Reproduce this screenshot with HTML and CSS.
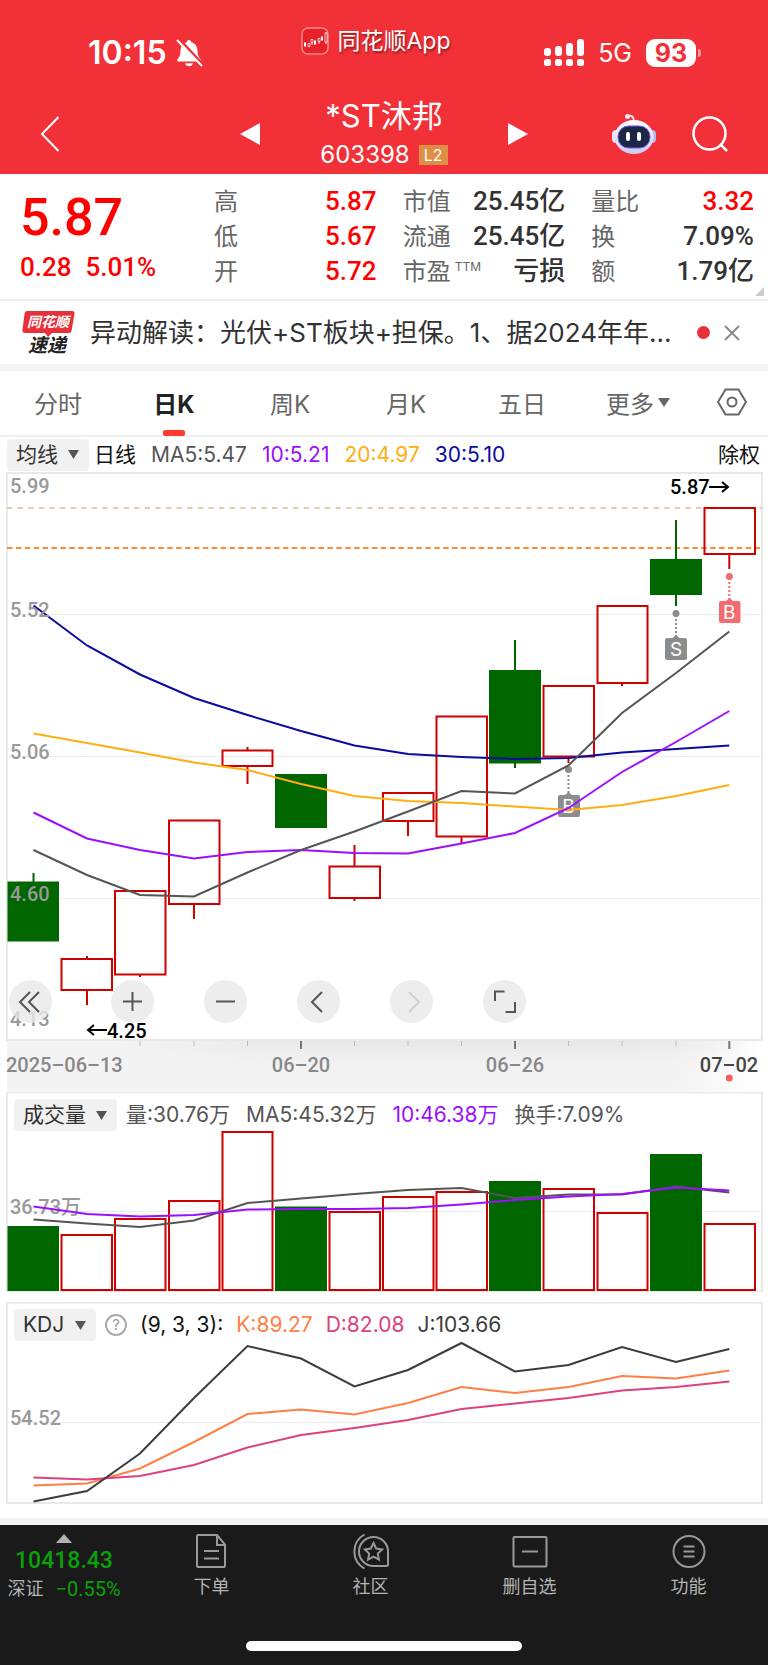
FILE: index.html
```html
<!DOCTYPE html>
<html lang="zh-CN">
  <head>
    <meta charset="UTF-8" />
    <meta name="viewport" content="width=device-width, initial-scale=1.0" />
    <title>*ST沐邦 603398</title>
    <link rel="stylesheet" href="styles.css">
  </head>
  <body>
    <header class="header">
      <div class="status">
        <div class="status-time">
          <span>10:15</span>
          <svg width="28" height="28" viewBox="0 0 28 28">
            <path d="M14 1c1.500 0 2.200 1 2.300 2.200 4 1.200 6 4.300 6.200 8.300.2 4.600 1 6.500 3 8.700.8 1 .4 2.300-.9 2.300H3.400c-1.300 0-1.700-1.300-.9-2.300 2-2.200 2.800-4.100 3-8.700.2-4 2.200-7.100 6.200-8.300C11.800 2 12.500 1 14 1z" fill="#fff" />
            <path d="M10 24.300h8c-.5 1.900-2 3-4 3s-3.500-1.100-4-3z" fill="#fff" />
            <path d="M4 0l24 26" stroke="#f13037" stroke-width="3" />
            <path d="M2 1l25 26" stroke="#fff" stroke-width="2" />
          </svg>
        </div>
        <div class="status-app">
          <svg width="28" height="28" viewBox="0 0 28 28">
            <rect x="1" y="1" width="26" height="26" rx="6" fill="#e8222b" stroke="#f9888b" stroke-width="1.500" />
            <path d="M4 15v5M8 16v4M11 12v6M14 13v5M18 11v6M21 9v5M25 5v12" stroke="#fff" stroke-width="1" />
            <path d="M3 16h2v3H3zM13 14h2v3h-2zM20 10h2v3h-2z" fill="#fff" />
            <path d="M7 16.500h2v3H7zM10 12.500h2v3h-2zM17 11.500h2v3h-2zM24 6h2v9h-2z" fill="#e8222b" stroke="#fff" stroke-width=".7" />
          </svg>
          <span>同花顺App</span>
        </div>
        <div class="status-signal">
          <svg width="40" height="28" viewBox="0 0 40 28" fill="#fff">
            <rect x="0" y="9" width="7" height="8" rx="3" />
            <rect x="11" y="7" width="7" height="10" rx="3" />
            <rect x="22" y="4" width="7" height="13" rx="3" />
            <rect x="33" y="0" width="7" height="17" rx="3" />
            <rect x="0" y="20" width="7" height="7" rx="2.500" />
            <rect x="11" y="20" width="7" height="7" rx="2.500" />
            <rect x="22" y="20" width="7" height="7" rx="2.500" />
            <rect x="33" y="20" width="7" height="7" rx="2.500" />
          </svg>
          <span class="network">5G</span>
          <span class="battery">93</span>
        </div>
      </div>

      <div class="titlebar">
        <button class="icon-btn back" aria-label="返回">
          <svg width="20" height="38" viewBox="0 0 20 38" fill="none">
            <path d="M18.500 2L2 19l16.500 17" stroke="#fff" stroke-width="2" />
          </svg>
        </button>
        <div class="stock">
          <button class="icon-btn" aria-label="上一只">
            <svg width="20" height="22" viewBox="0 0 20 22"><path d="M20 0v22L0 11z" fill="#fff" /></svg>
          </button>
          <div class="stock-name">
            <h1>*ST沐邦</h1>
            <p>603398 <span class="level">L2</span></p>
          </div>
          <button class="icon-btn" aria-label="下一只">
            <svg width="20" height="22" viewBox="0 0 20 22"><path d="M0 0v22l20-11z" fill="#fff" /></svg>
          </button>
        </div>
        <div class="title-actions">
          <button class="icon-btn" aria-label="智能助手">
            <svg width="44" height="42" viewBox="0 0 44 42">
              <defs>
                <linearGradient id="shell" x1="0" y1="0" x2="0" y2="1">
                  <stop offset="0" stop-color="#fff" />
                  <stop offset="1" stop-color="#c9cbf1" />
                </linearGradient>
              </defs>
              <path d="M16 3c4-1 6 1 6 6" fill="none" stroke="#f3e3f5" stroke-width="2" />
              <circle cx="15.500" cy="3.500" r="2.500" fill="#f5e6f4" />
              <rect x="0" y="17" width="9" height="13" rx="4" fill="#e3e1f8" />
              <rect x="35" y="17" width="9" height="13" rx="4" fill="#b7b9f3" />
              <ellipse cx="22" cy="24" rx="19.500" ry="17" fill="url(#shell)" />
              <rect x="6" y="13" width="32" height="22" rx="10.500" fill="#1c2646" stroke="#7a55e8" stroke-width="1" />
              <rect x="14" y="19" width="4" height="9" rx="2" fill="#fff" />
              <rect x="25" y="19" width="4" height="9" rx="2" fill="#fff" />
            </svg>
          </button>
          <button class="icon-btn" aria-label="搜索">
            <svg width="36" height="36" viewBox="0 0 36 36" fill="none" stroke="#fff" stroke-width="2.500">
              <circle cx="17.500" cy="17.500" r="16" />
              <path d="M28 28l7 7" />
            </svg>
          </button>
        </div>
      </div>
    </header>

    <main>
      <section class="quote">
        <div class="price">
          <strong>5.87</strong>
          <p><span>0.28</span><span>5.01%</span></p>
        </div>
        <dl class="stats">
          <div><dt>高</dt><dd class="up">5.87</dd></div>
          <div><dt>低</dt><dd class="up">5.67</dd></div>
          <div><dt>开</dt><dd class="up">5.72</dd></div>
        </dl>
        <dl class="stats">
          <div><dt>市值</dt><dd>25.45亿</dd></div>
          <div><dt>流通</dt><dd>25.45亿</dd></div>
          <div><dt>市盈<sup>TTM</sup></dt><dd>亏损</dd></div>
        </dl>
        <dl class="stats">
          <div><dt>量比</dt><dd class="up">3.32</dd></div>
          <div><dt>换</dt><dd>7.09%</dd></div>
          <div><dt>额</dt><dd>1.79亿</dd></div>
        </dl>
        <svg class="corner" width="9" height="9" viewBox="0 0 9 9"><path d="M9 0v9H0z" fill="#ccc" /></svg>
      </section>

      <section class="news">
        <svg class="news-logo" width="54" height="46" viewBox="0 0 54 46">
          <path d="M5 1h45q3 0 2.500 3l-3 17q-.5 2-2.500 2H30l-4 4-3-4H3q-3 0-2.500-3l2-16q.5-3 2.500-3z" fill="#e8303a" />
          <text class="logo-top" x="5" y="17">同花顺</text>
          <text class="logo-bottom" x="6" y="42">速递</text>
        </svg>
        <a href="#news">异动解读：光伏+ST板块+担保。1、据2024年年...</a>
        <span class="dot"></span>
        <button class="icon-btn" aria-label="关闭">
          <svg width="16" height="16" viewBox="0 0 16 16"><path d="M1 1l14 14M15 1L1 15" stroke="#8c8c8c" stroke-width="2" /></svg>
        </button>
      </section>

      <nav class="tabs">
        <button>分时</button>
        <button class="active">日K</button>
        <button>周K</button>
        <button>月K</button>
        <button>五日</button>
        <button aria-haspopup="menu">更多<svg width="12" height="9" viewBox="0 0 12 9"><path d="M0 0h12L6 9z" fill="#666" /></svg></button>
        <button aria-label="设置">
          <svg width="30" height="28" viewBox="0 0 30 28" fill="none" stroke="#666" stroke-width="2">
            <path d="M8.500 1.500h13L29 14l-7.500 12.500h-13L1 14z" />
            <circle cx="15" cy="14" r="4.500" />
          </svg>
        </button>
      </nav>

      <div class="legend ma-legend">
        <label class="picker">
          <select aria-label="主图指标"><option>均线</option></select>
          <svg width="11" height="9" viewBox="0 0 11 9"><path d="M0 0h11L5.500 9z" fill="#555" /></svg>
        </label>
        <span class="strong">日线</span>
        <span>MA5:5.47</span>
        <span class="purple">10:5.21</span>
        <span class="amber">20:4.97</span>
        <span class="navy">30:5.10</span>
        <span class="strong last">除权</span>
      </div>

      <section class="kline">
        <svg class="chart" viewBox="0 472 768 620">
          <defs>
            <linearGradient id="axisX" x1="0" x2="1">
              <stop offset="0" stop-color="#f3f3f3" />
              <stop offset=".88" stop-color="#f3f3f3" />
              <stop offset="1" stop-color="#fff" />
            </linearGradient>
            <linearGradient id="axisY" x1="0" y1="0" x2="0" y2="1">
              <stop offset="0" stop-color="#e6e6e6" />
              <stop offset="1" stop-color="#f3f3f3" stop-opacity="0" />
            </linearGradient>
            <linearGradient id="fade" x1="0" x2="1">
              <stop offset="0" stop-color="#000" />
              <stop offset=".3" stop-color="#fff" />
              <stop offset=".8" stop-color="#fff" />
              <stop offset="1" stop-color="#000" />
            </linearGradient>
            <mask id="axisMask"><rect x="120" y="1040" width="642" height="52" fill="url(#fade)" /></mask>
          </defs>

          <!-- frame and grid -->
          <rect class="frame" x="7" y="473" width="755" height="567" />
          <path class="grid" d="M7 614.500h755M7 756.500h755M7 898.500h755" />
          <path class="limit" d="M7 508h755" />
          <path class="cost" d="M7 548h755" />

          <!-- candles -->
          <g class="down">
            <path d="M33.500 873v10M515 640v30M515 763v5M676 520v40M676 595v11" />
            <rect x="7.500" y="881.500" width="51.500" height="60" />
            <rect x="275" y="774" width="52" height="54" />
            <rect x="489" y="670" width="52" height="93.500" />
            <rect x="650" y="559" width="52" height="36" />
          </g>
          <g class="up-candle">
            <path d="M87 956v3M87 990v15M140 974v3M194 904v15M247.500 747v4M247.500 766v18M354.500 845v21M354.500 898v3M408 821v15M461.500 837v6M568.500 757v6M622 683v3M729.300 554v15" />
            <rect x="61.500" y="959" width="50.500" height="31" />
            <rect x="115" y="891" width="50.500" height="83.500" />
            <rect x="169" y="820.500" width="50.500" height="83.500" />
            <rect x="222.500" y="750.500" width="50" height="15.500" />
            <rect x="329.500" y="866.500" width="50.500" height="31.500" />
            <rect x="383" y="793" width="50.500" height="28" />
            <rect x="436.500" y="716.500" width="50.500" height="120" />
            <rect x="543.500" y="686" width="50.500" height="70.500" />
            <rect x="597.500" y="606" width="50" height="77" />
            <rect x="704.500" y="508" width="50.500" height="46" />
          </g>

          <!-- trade markers -->
          <g class="mark">
            <path d="M568.500 771v22M676 615v21" />
            <circle cx="568.500" cy="769.500" r="3.500" />
            <circle cx="676" cy="613.500" r="3.500" />
            <path class="flag" d="M560 795h5l3.500-3 3.500 3h6q2 0 2 2v18q0 2-2 2h-18q-2 0-2-2v-18q0-2 2-2z" />
            <path class="flag" d="M667 638h5.500l3.500-3 3.500 3h5.500q2 0 2 2v18q0 2-2 2h-18q-2 0-2-2v-18q0-2 2-2z" />
            <text x="568.500" y="813">B</text>
            <text x="676" y="656">S</text>
          </g>
          <g class="mark mark-buy">
            <path d="M729.300 578v21" />
            <circle cx="729.300" cy="576.500" r="3.500" />
            <path class="flag" d="M721 601h5l3.500-3 3.500 3h5.500q2 0 2 2v18q0 2-2 2h-17.500q-2 0-2-2v-18q0-2 2-2z" />
            <text x="729.300" y="619">B</text>
          </g>

          <!-- moving averages -->
          <polyline class="line navy" points="33.500,605.500 87,645.500 140,674.500 194,698 247.500,715 301,731 354.500,745.500 408,754 461.500,757 515,759 568.500,758 622,752.500 676,749 729.300,745.500" />
          <polyline class="line amber" points="33.500,733.500 87,743 140,752.500 194,762.500 247.500,770 301,784 354.500,796 408,801 461.500,803 515,806.500 568.500,810 622,805 676,796 729.300,785" />
          <polyline class="line purple" points="33.500,812.500 87,838.500 140,850 194,858.500 247.500,852 301,850 354.500,853 408,853.500 461.500,843.500 515,833 568.500,808 622,772 676,742 729.300,711" />
          <polyline class="line gray" points="33.500,850 87,875 140,895 194,896.500 247.500,872.500 301,850 354.500,831.500 408,811.500 461.500,791 515,793.500 568.500,765.500 622,713 676,673 729.300,631.500" />

          <g class="scale">
            <text x="10" y="493">5.99</text>
            <text x="10" y="617">5.52</text>
            <text x="10" y="759">5.06</text>
            <text x="10" y="901">4.60</text>
            <text x="10" y="1026">4.13</text>
          </g>
          <g class="extreme">
            <text x="670" y="494">5.87</text>
            <path d="M709 487h19M722 482l6 5-6 5" />
            <text x="107" y="1038">4.25</text>
            <path d="M107 1030H88M94 1025l-6 5 6 5" />
          </g>

          <!-- date axis -->
          <rect x="7" y="1041" width="755" height="51" fill="url(#axisX)" />
          <rect x="120" y="1041" width="642" height="36" fill="url(#axisY)" mask="url(#axisMask)" />
          <path class="tick" d="M140 1041v5M194 1041v5M247.500 1041v5M354.500 1041v5M408 1041v5M461.500 1041v5M568.500 1041v5M622 1041v5M676 1041v5" />
          <path class="tick tick-major" d="M301 1041v8M515 1041v8M729.300 1041v8" />
          <g class="dates">
            <text x="6" y="1072">2025–06–13</text>
            <text x="301" y="1072" text-anchor="middle">06–20</text>
            <text x="515" y="1072" text-anchor="middle">06–26</text>
            <text class="today" x="729" y="1072" text-anchor="middle">07–02</text>
          </g>
          <circle cx="729.300" cy="1078" r="3.500" fill="#f4605e" />
        </svg>

        <div class="controls">
          <button aria-label="最早"><svg viewBox="0 0 43 43"><path d="M21 12L11 22l10 10M30 12L20 22l10 10" /></svg></button>
          <button aria-label="放大"><svg viewBox="0 0 43 43"><path d="M12 21.500h19M21.500 12v19" /></svg></button>
          <button aria-label="缩小"><svg viewBox="0 0 43 43"><path d="M12 21.500h19" /></svg></button>
          <button aria-label="左移"><svg viewBox="0 0 43 43"><path d="M25 12L15 22l10 10" /></svg></button>
          <button aria-label="右移" disabled><svg viewBox="0 0 43 43"><path d="M19 12l10 10-10 10" /></svg></button>
          <button aria-label="全屏"><svg viewBox="0 0 43 43"><path d="M12 21v-9.500h9.500M32 22v10h-9.500" /></svg></button>
        </div>
      </section>

      <section class="panel">
        <div class="legend volume-legend">
          <label class="picker">
            <select aria-label="副图指标一"><option>成交量</option></select>
            <svg width="11" height="9" viewBox="0 0 11 9"><path d="M0 0h11L5.500 9z" fill="#555" /></svg>
          </label>
          <span>量:30.76万</span>
          <span>MA5:45.32万</span>
          <span class="purple">10:46.38万</span>
          <span>换手:7.09%</span>
        </div>
        <svg class="chart" viewBox="0 1092 768 200">
          <rect class="frame" x="7" y="1092.500" width="755" height="199" />
          <path class="grid" d="M7 1211.500h755" />
          <g class="down">
            <rect x="7.500" y="1226" width="51.500" height="65" />
            <rect x="275" y="1206.500" width="52" height="84.500" />
            <rect x="489" y="1181" width="52" height="110" />
            <rect x="650" y="1154" width="52" height="137" />
          </g>
          <g class="up-candle">
            <rect x="61.500" y="1235" width="50.500" height="55" />
            <rect x="115" y="1219" width="50.500" height="71" />
            <rect x="169" y="1201" width="50.500" height="89" />
            <rect x="222.500" y="1132" width="50" height="158" />
            <rect x="329.500" y="1212" width="50.500" height="78" />
            <rect x="383" y="1197" width="50.500" height="93" />
            <rect x="436.500" y="1192" width="50.500" height="98" />
            <rect x="543.500" y="1189" width="50.500" height="101" />
            <rect x="597.500" y="1213" width="50" height="77" />
            <rect x="704.500" y="1224" width="50.500" height="66" />
          </g>
          <text class="scale" x="10" y="1214">36.73万</text>
          <polyline class="line gray" points="33.500,1219.500 87,1223.500 140,1227 194,1220.500 247.500,1203 301,1198.500 354.500,1194 408,1190 461.500,1188 515,1198 568.500,1194.500 622,1194.500 676,1186.500 729.300,1192.500" />
          <polyline class="line purple" points="33.500,1206.500 87,1214 140,1216.500 194,1215 247.500,1209.500 301,1209 354.500,1209 408,1208 461.500,1204.500 515,1200 568.500,1196.500 622,1194 676,1187.500 729.300,1190.500" />
        </svg>
      </section>

      <section class="panel">
        <div class="legend kdj-legend">
          <label class="picker">
            <select aria-label="副图指标二"><option>KDJ</option></select>
            <svg width="11" height="9" viewBox="0 0 11 9"><path d="M0 0h11L5.500 9z" fill="#555" /></svg>
          </label>
          <button class="help" aria-label="指标说明">?</button>
          <span class="strong">(9, 3, 3):</span>
          <span class="orange">K:89.27</span>
          <span class="pink">D:82.08</span>
          <span class="dark">J:103.66</span>
        </div>
        <svg class="chart" viewBox="0 1302 768 202">
          <rect class="frame" x="7" y="1302.500" width="755" height="200.500" />
          <path class="grid" d="M7 1422.500h755" />
          <text class="scale" x="10" y="1425">54.52</text>
          <polyline class="line orange" points="33.500,1485.500 87,1483.500 140,1468.500 194,1442 247.500,1414 301,1409.500 354.500,1414.500 408,1403 461.500,1387 515,1393 568.500,1387 622,1376 676,1378.500 729.300,1370.500" />
          <polyline class="line pink" points="33.500,1477.500 87,1479.500 140,1476 194,1465 247.500,1447.500 301,1435 354.500,1428 408,1420 461.500,1409 515,1403.500 568.500,1398 622,1390.500 676,1387 729.300,1381.500" />
          <polyline class="line dark" points="33.500,1501.500 87,1491 140,1453.500 194,1398 247.500,1346 301,1358.500 354.500,1386.500 408,1370 461.500,1343 515,1371.500 568.500,1365 622,1347 676,1362 729.300,1349" />
        </svg>
      </section>
    </main>

    <footer class="footer">
      <div class="toolbar">
        <a class="index" href="#index">
          <svg width="16" height="9" viewBox="0 0 16 9"><path d="M8 0l8 9H0z" fill="#b3b3b3" /></svg>
          <strong>10418.43</strong>
          <span><em>深证</em>−0.55%</span>
        </a>
        <a class="tool" href="#order">
          <svg width="36" height="36" viewBox="0 0 36 36">
            <path d="M4 2h19l8 9.500V33q0 1-1 1H4q-1 0-1-1V3q0-1 1-1zM23 2v10h8M10 18h15M10 25.500h15" />
          </svg>
          下单
        </a>
        <a class="tool" href="#community">
          <svg width="36" height="36" viewBox="0 0 36 36">
            <path d="M20.500 4a14.500 14.500 0 1 0 0 29h13q1.500 0 1.500-1.500V18.500A14.500 14.500 0 0 0 20.500 4z" />
            <path d="M11.500 1.500C-2 9-2 28 11.500 35.500M20.500 10l2.700 5.500 6 .9-4.400 4.200 1.100 6-5.400-2.900-5.400 2.900 1.100-6-4.400-4.200 6-.9z" />
          </svg>
          社区
        </a>
        <a class="tool" href="#remove">
          <svg width="36" height="36" viewBox="0 0 36 36">
            <rect x="1.500" y="4" width="33" height="29.500" rx="1" />
            <path d="M10 18.500h16" />
          </svg>
          删自选
        </a>
        <a class="tool" href="#more">
          <svg width="36" height="36" viewBox="0 0 36 36">
            <circle cx="18" cy="18.500" r="15.500" />
            <path d="M12.500 13.500h11M12.500 18.500h11M12.500 23.500h11" />
          </svg>
          功能
        </a>
      </div>
      <div class="home-bar"></div>
    </footer>
  </body>
</html>
```
FILE: styles.css
```css
* {
  box-sizing: border-box;
}
body {
  margin: 0;
  background-color: #fff;
  color: #323232;
  font-family: Inter, "Noto Sans CJK SC", sans-serif;
}
button,
select {
  border: 0;
  padding: 0;
  background: none;
  color: inherit;
  font: inherit;
}
a {
  color: inherit;
  text-decoration: none;
}
h1,
p,
dl,
dd {
  margin: 0;
}
svg {
  display: block;
  flex: none;
}
.icon-btn {
  display: flex;
}

/* header */
.header {
  height: 174px;
  background-color: #f13037;
  color: #fff;
}
.status {
  display: grid;
  grid-template-columns: 1fr auto 1fr;
  align-items: center;
  height: 94px;
  padding: 11px 72px 0 56px;
}
.status-time {
  display: flex;
  align-items: center;
  gap: 8px;
  padding-left: 32px;
  font-size: 32px;
  font-weight: 600;
}
.status-app {
  display: flex;
  align-items: center;
  gap: 8px;
  padding-bottom: 24px;
  font-size: 23px;
  line-height: 28px;
  text-shadow: 1px 2px 2px rgba(0, 0, 0, 0.4);
}
.status-signal {
  display: flex;
  align-items: center;
  justify-content: flex-end;
  gap: 14px;
}
.network {
  font-size: 25px;
}
.battery {
  position: relative;
  width: 50px;
  border-radius: 9px;
  background-color: #fff;
  color: #f13037;
  font-size: 25px;
  font-weight: 700;
  line-height: 28px;
  text-align: center;
}
.battery::after {
  content: "";
  position: absolute;
  top: 10px;
  right: -5px;
  width: 3px;
  height: 8px;
  border-radius: 0 3px 3px 0;
  background-color: #f8a0a3;
}
.titlebar {
  display: grid;
  grid-template-columns: 1fr 42% 1fr;
  align-items: center;
  height: 80px;
  padding: 0 40px;
}
.stock {
  display: flex;
  align-items: center;
  justify-content: space-between;
}
.stock-name {
  text-align: center;
}
.stock-name h1 {
  font-size: 31px;
  font-weight: 400;
  line-height: 42px;
}
.stock-name p {
  display: flex;
  align-items: center;
  justify-content: center;
  gap: 9px;
  font-size: 24px;
  line-height: 36px;
}
.level {
  width: 29px;
  background-color: #df8f45;
  font-size: 16px;
  line-height: 20px;
}
.title-actions {
  display: flex;
  align-items: center;
  justify-content: flex-end;
  gap: 36px;
}

/* quote */
.quote {
  position: relative;
  display: grid;
  grid-template-columns: 168px repeat(3, 1fr);
  column-gap: 26px;
  height: 127px;
  padding: 10px 14px 0 20px;
  border-bottom: 2px solid #ececec;
}
.price,
.up {
  color: #f00;
}
.price {
  font-family: Roboto, sans-serif;
  font-weight: 500;
}
.price strong {
  display: block;
  font-size: 52px;
  font-weight: 500;
  line-height: 68px;
}
.price p {
  display: flex;
  gap: 14px;
  font-size: 26px;
  line-height: 30px;
}
.stats div {
  display: flex;
  justify-content: space-between;
  line-height: 35px;
}
.stats dt {
  color: #666;
  font-size: 24px;
  white-space: nowrap;
}
.stats sup {
  padding-left: 4px;
  font-size: 12px;
  line-height: 12px;
}
.stats dd {
  font-family: Roboto, "Noto Sans CJK SC", sans-serif;
  font-size: 26px;
  font-weight: 500;
}
.corner {
  position: absolute;
  right: 4px;
  bottom: 3px;
}

/* news strip */
.news {
  display: flex;
  align-items: center;
  height: 70px;
  padding: 0 28px 0 22px;
  border-bottom: 7px solid #f4f4f4;
}
.news a {
  flex: 1;
  padding: 0 0 5px 14px;
  font-size: 26px;
  white-space: nowrap;
}
.news-logo {
  overflow: visible;
}
.logo-top,
.logo-bottom {
  font-family: "Noto Sans CJK SC", sans-serif;
  font-style: italic;
  font-weight: 700;
}
.logo-top {
  fill: #fff;
  font-size: 14px;
}
.logo-bottom {
  fill: #222;
  font-size: 19px;
}
.dot {
  width: 13px;
  height: 13px;
  margin-right: 14px;
  border-radius: 50%;
  background-color: #e8303a;
}

/* period tabs */
.tabs {
  display: grid;
  grid-template-columns: repeat(6, 1fr) 72px;
  height: 66px;
  border-bottom: 2px solid #f0f0f0;
  color: #666;
  font-size: 24px;
}
.tabs button {
  position: relative;
  display: flex;
  align-items: center;
  justify-content: center;
  gap: 4px;
  padding-bottom: 2px;
}
.tabs .active {
  color: #222;
  font-weight: 700;
}
.active::after {
  content: "";
  position: absolute;
  bottom: -1px;
  width: 22px;
  height: 6px;
  border-radius: 2px;
  background-color: #ff3b30;
}

/* indicator legends */
.legend {
  display: flex;
  align-items: center;
  gap: 15px;
  color: #555;
  font-size: 21px;
  line-height: 32px;
  white-space: nowrap;
}
.ma-legend {
  height: 35px;
  padding: 0 8px 0 7px;
}
.ma-legend .picker {
  margin-right: -10px;
}
.volume-legend {
  gap: 16px;
}
.kdj-legend {
  gap: 13px;
}
.picker {
  display: flex;
  align-items: center;
  gap: 10px;
  height: 32px;
  margin-right: -7px;
  padding: 0 10px 0 9px;
  border-radius: 4px;
  background-color: #f1f1f1;
  color: #323232;
}
.picker select {
  appearance: none;
}
.last {
  margin-left: auto;
}
.help {
  width: 22px;
  height: 22px;
  margin-left: 3px;
  border: 2px solid #aaa;
  border-radius: 50%;
  color: #999;
  font-size: 15px;
  line-height: 18px;
}
.strong {
  color: #111;
}
.purple {
  color: #9b0fff;
}
.amber {
  color: #ffae12;
}
.navy {
  color: #0b0ba0;
}
.gray {
  color: #555;
}
.orange {
  color: #ff7f45;
}
.pink {
  color: #dc427f;
}
.dark {
  color: #3c3c3c;
}

/* charts */
.kline,
.panel {
  position: relative;
}
.panel {
  margin-bottom: 10px;
}
.panel .legend {
  position: absolute;
  top: 7px;
  left: 14px;
}
.chart {
  width: 100%;
  height: auto;
}
.frame {
  fill: none;
  stroke: #e9e9e9;
  stroke-width: 2;
}
.grid {
  stroke: #ececec;
}
.limit {
  stroke: #e6cdaa;
  stroke-width: 2;
  stroke-dasharray: 5.3;
}
.cost {
  stroke: #ff8c32;
  stroke-width: 2;
  stroke-dasharray: 5.500 3.400;
}
.down {
  fill: #006600;
  stroke: none;
}
.down path {
  stroke: #006600;
  stroke-width: 2;
}
.up-candle {
  fill: none;
  stroke: #d00000;
  stroke-width: 2;
}
.line {
  fill: none;
  stroke: currentColor;
  stroke-width: 2;
}
.scale,
.extreme,
.dates {
  fill: #999;
  font-family: Roboto, "Noto Sans CJK SC", sans-serif;
  font-size: 20px;
  font-weight: 500;
}
.extreme {
  fill: #000;
}
.extreme path {
  fill: none;
  stroke: #000;
  stroke-width: 2;
}
.mark {
  fill: #8c8c8c;
  stroke: none;
}
.mark path {
  stroke: #8c8c8c;
  stroke-width: 2;
  stroke-dasharray: 2;
}
.mark .flag {
  stroke: none;
}
.mark text {
  fill: #fff;
  font-size: 19px;
  text-anchor: middle;
}
.mark-buy {
  fill: #f26b6e;
}
.mark-buy path {
  stroke: #f26b6e;
}
.tick {
  stroke: #bbb;
}
.tick-major {
  stroke: #777;
  stroke-width: 2;
}
.dates {
  fill: #888;
}
.dates .today {
  fill: #444;
}
.controls {
  position: absolute;
  bottom: 69px;
  left: 9px;
  display: flex;
  gap: 50px;
}
.controls button {
  width: 43px;
  height: 43px;
  border-radius: 50%;
  background-color: rgba(232, 232, 232, 0.8);
}
.controls button:first-child {
  margin-right: 9px;
}
.controls path {
  fill: none;
  stroke: #555;
  stroke-width: 2;
}
.controls button:disabled path {
  stroke: #d0d0d0;
}

/* bottom bar */
.footer {
  margin-top: 14px;
  height: 147px;
  border-top: 7px solid #f4f4f4;
  background-color: #1a1a1a;
  color: #b3b3b3;
}
.toolbar {
  display: grid;
  grid-template-columns: 132px repeat(4, 1fr);
  height: 116px;
  font-size: 18px;
}
.index {
  display: flex;
  flex-direction: column;
  align-items: center;
  padding: 9px 4px 0 0;
  color: #0aa00a;
  font-family: Roboto, "Noto Sans CJK SC", sans-serif;
  font-size: 20px;
}
.index strong {
  margin-top: 4px;
  font-size: 23px;
  font-weight: 500;
  line-height: 28px;
}
.index span {
  display: flex;
  gap: 12px;
  line-height: 28px;
}
.index em {
  color: #b3b3b3;
  font-size: 18px;
  font-style: normal;
}
.tool {
  display: flex;
  flex-direction: column;
  align-items: center;
  gap: 4px;
  padding-top: 8px;
  line-height: 28px;
}
.tool path,
.tool rect,
.tool circle {
  fill: none;
  stroke: #999;
  stroke-width: 2;
}
.home-bar {
  width: 36%;
  height: 10px;
  margin: 0 auto;
  border-radius: 5px;
  background-color: #fff;
}
```
